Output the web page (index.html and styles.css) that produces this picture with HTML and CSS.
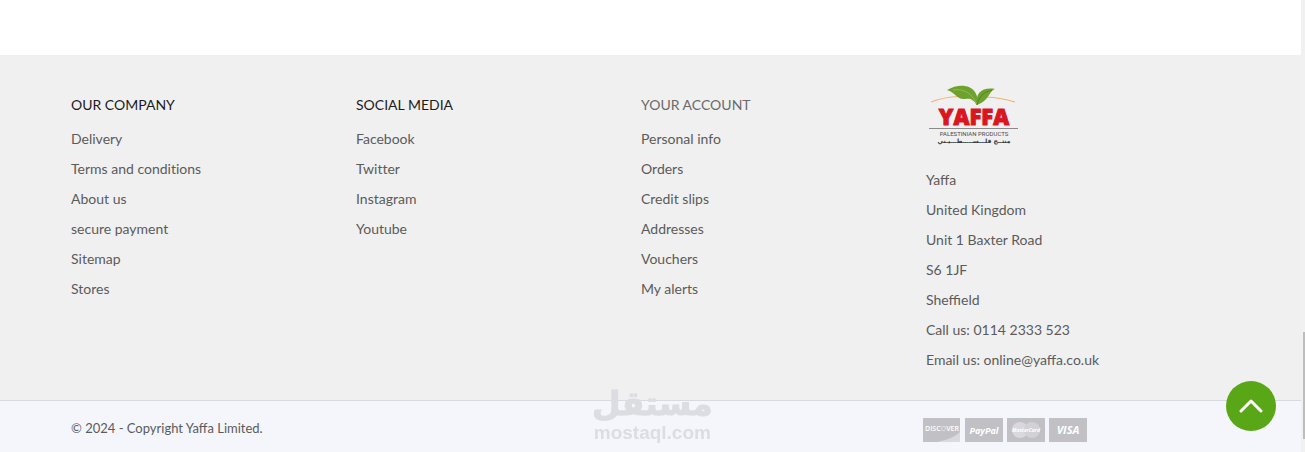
FILE: index.html
```html
<!DOCTYPE html>
<html lang="en">
<head>
    <meta charset="UTF-8">
    <meta name="viewport" content="width=device-width, initial-scale=1.0">
    <title>Yaffa</title>
    <link rel="stylesheet" href="styles.css">
</head>
<body>
    <main class="content"></main>

    <footer class="footer">
        <div class="footer-columns">
            <nav class="footer-column">
                <h3 class="footer-title">OUR COMPANY</h3>
                <ul class="footer-links">
                    <li><a href="#">Delivery</a></li>
                    <li><a href="#">Terms and conditions</a></li>
                    <li><a href="#">About us</a></li>
                    <li><a href="#">secure payment</a></li>
                    <li><a href="#">Sitemap</a></li>
                    <li><a href="#">Stores</a></li>
                </ul>
            </nav>
            <nav class="footer-column">
                <h3 class="footer-title">SOCIAL MEDIA</h3>
                <ul class="footer-links">
                    <li><a href="#">Facebook</a></li>
                    <li><a href="#">Twitter</a></li>
                    <li><a href="#">Instagram</a></li>
                    <li><a href="#">Youtube</a></li>
                </ul>
            </nav>
            <nav class="footer-column">
                <h3 class="footer-title"><a href="#">YOUR ACCOUNT</a></h3>
                <ul class="footer-links">
                    <li><a href="#">Personal info</a></li>
                    <li><a href="#">Orders</a></li>
                    <li><a href="#">Credit slips</a></li>
                    <li><a href="#">Addresses</a></li>
                    <li><a href="#">Vouchers</a></li>
                    <li><a href="#">My alerts</a></li>
                </ul>
            </nav>
            <div class="footer-column">
                <a href="#" class="logo" aria-label="Yaffa">
                    <svg width="96" height="64" viewBox="0 0 96 64">
                        <path d="M5 17Q18 12 33 11.5M60 12Q74 12.500 89 17" fill="none" stroke="#f3b274" stroke-width="1.2"/>
                        <path d="M21 5C31-1 44-1 49 7C52 12 52 16 51 20C47 14 44 13 39 14C31 15 29 7 21 5z" fill="#6fa12f"/>
                        <path d="M51 20C49 8 56 2 69 4C62 7 64 15 51 20z" fill="#6fa12f"/>
                        <path d="M27 5C38 3 47 9 51 20" fill="none" stroke="#8dbb4c"/>
                        <path d="M51 20C53 11 58 7 66 5" fill="none" stroke="#4f8520"/>
                        <text x="48" y="40" text-anchor="middle" class="logo-name">YAFFA</text>
                        <path d="M3 43.5H92" stroke="#8a8a8a"/>
                        <text x="48" y="51" text-anchor="middle" class="logo-line">PALESTINIAN PRODUCTS</text>
                        <text x="48" y="58" text-anchor="middle" class="logo-arabic">منتــج فلـــســـــطـــيـني</text>
                    </svg>
                </a>
                <ul class="footer-contact">
                    <li>Yaffa</li>
                    <li>United Kingdom</li>
                    <li>Unit 1 Baxter Road</li>
                    <li>S6 1JF</li>
                    <li>Sheffield</li>
                    <li>Call us: 0114 2333 523</li>
                    <li>Email us: <a href="#">online@yaffa.co.uk</a></li>
                </ul>
            </div>
        </div>

        <div class="footer-bottom">
            <p class="copyright">© 2024 - Copyright Yaffa Limited.</p>
            <div class="payments">
                <svg class="card" width="38" height="24" viewBox="0 0 38 24">
                    <path d="M0 0H37V24H0z" fill="#c1c1c5"/>
                    <path d="M37 14Q30 21 14 24H37z" fill="#d9d9de"/>
                    <text x="19" y="13" text-anchor="middle" class="card-discover">DISC<tspan fill="#dedee2">O</tspan>VER</text>
                </svg>
                <svg class="card" width="38" height="24" viewBox="0 0 38 24">
                    <path d="M0 0H38V24H0z" fill="#c1c1c5"/>
                    <text x="19" y="16" text-anchor="middle" class="card-paypal">PayPal</text>
                </svg>
                <svg class="card" width="38" height="24" viewBox="0 0 38 24">
                    <path d="M0 0H38V24H0z" fill="#c1c1c5"/>
                    <circle cx="13" cy="12" r="8" fill="#d8d8dd"/>
                    <circle cx="25" cy="12" r="8" fill="#d1d1d6"/>
                    <text x="19" y="14" text-anchor="middle" class="card-master">MasterCard</text>
                </svg>
                <svg class="card" width="38" height="24" viewBox="0 0 38 24">
                    <path d="M0 0H38V24H0z" fill="#c1c1c5"/>
                    <text x="19" y="16" text-anchor="middle" class="card-visa">VISA</text>
                </svg>
            </div>
        </div>
    </footer>

    <div class="watermark">
        <span class="watermark-arabic" lang="ar">مستقل</span>
        <span class="watermark-latin">mostaql.com</span>
    </div>

    <button type="button" class="back-to-top" aria-label="Back to top">
        <svg width="24" height="14" viewBox="0 0 24 14">
            <path d="M2 12L12 2L22 12" fill="none" stroke="#fff" stroke-width="3" stroke-linecap="round" stroke-linejoin="round"/>
        </svg>
    </button>

    <div class="scrollbar">
        <div class="scrollbar-thumb"></div>
    </div>
</body>
</html>
```

FILE: styles.css
```css
body {
    margin: 0;
    min-height: 100vh;
    display: flex;
    flex-direction: column;
    background: #fff;
    color: #5b5b5b;
    font-family: Lato, sans-serif;
    font-size: 14px;
    line-height: 30px;
}

a {
    color: inherit;
    text-decoration: none;
}

.content {
    flex: 1;
}

.footer {
    background: #f0f0f0;
}

.footer-columns {
    display: grid;
    grid-template-columns: repeat(4, 1fr);
    gap: 30px;
    padding: 30px 124px 25px 71px;
}

.footer-title {
    margin: 5px 0 4px;
    color: #1c1c1c;
    font-size: 14px;
    font-weight: 400;
}

.footer-title a {
    color: #6a6a6a;
}

.footer-links,
.footer-contact {
    list-style: none;
    margin: 0;
    padding: 0;
}

.footer-links {
    font-variant-ligatures: none;
}

.logo {
    display: block;
    height: 80px;
}

.logo svg {
    display: block;
}

.logo-name {
    font-family: "Open Sans", sans-serif;
    font-size: 22px;
    font-weight: 800;
    fill: #d9161f;
    stroke: #d9161f;
}

.logo-line {
    font-family: Roboto, sans-serif;
    font-size: 6px;
    fill: #4a4a4a;
}

.logo-arabic {
    font-family: "DejaVu Sans", sans-serif;
    font-size: 6px;
    font-weight: 700;
    fill: #333;
}

.footer-bottom {
    display: flex;
    justify-content: space-between;
    align-items: center;
    padding: 10px 218px 10px 71px;
    border-top: 1px solid #d9dade;
    background: #f4f6fb;
}

.copyright {
    margin: 3px 0 0;
    font-size: 13px;
    line-height: 26px;
}

.payments {
    display: flex;
    gap: 4px;
    padding-top: 7px;
}

.card {
    display: block;
}

.card text {
    font-family: "Open Sans", sans-serif;
    font-weight: 700;
    fill: #fff;
}

.card .card-discover {
    font-size: 7px;
    font-weight: 600;
}

.card .card-paypal {
    font-size: 9px;
    font-style: italic;
}

.card .card-master {
    font-size: 5px;
    font-style: italic;
}

.card .card-visa {
    font-size: 11px;
    font-style: italic;
}

.watermark {
    position: fixed;
    left: 592px;
    bottom: 9px;
    display: flex;
    flex-direction: column;
    align-items: center;
    color: #dcdde1;
    font-weight: 700;
}

.watermark-arabic {
    font-family: "DejaVu Sans", sans-serif;
    font-size: 33px;
    line-height: 38px;
    -webkit-text-stroke: 1px #dcdde1;
}

.watermark-latin {
    font-family: "Liberation Sans", Arial, sans-serif;
    font-size: 19px;
    line-height: 20px;
}

.back-to-top {
    position: fixed;
    right: 29px;
    bottom: 21px;
    display: flex;
    justify-content: center;
    align-items: center;
    width: 50px;
    height: 50px;
    padding: 0;
    border: none;
    border-radius: 50%;
    background: #59a616;
    cursor: pointer;
}

.scrollbar {
    position: fixed;
    top: 0;
    right: 0;
    bottom: 0;
    width: 4px;
    background: #f1f1f1;
}

.scrollbar-thumb {
    position: absolute;
    right: 0;
    bottom: 13px;
    width: 2px;
    height: 107px;
    background: #bdbdbd;
}
```
